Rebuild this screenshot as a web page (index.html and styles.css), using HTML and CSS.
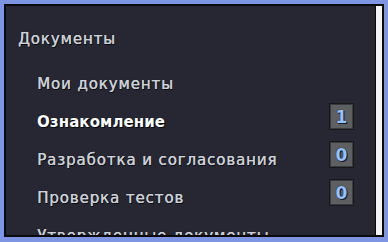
FILE: index.html
```html
<!DOCTYPE html>
<html lang="ru">
<head>
<meta charset="utf-8">
<link rel="stylesheet" href="styles.css">
</head>
<body>
<div class="frame">
  <div class="inner">
    <div class="content">
      <div class="heading">Документы</div>
      <ul class="menu">
        <li class="item"><span class="label">Мои документы</span></li>
        <li class="item active"><span class="label">Ознакомление</span><span class="badge">1</span></li>
        <li class="item"><span class="label">Разработка и согласования</span><span class="badge">0</span></li>
        <li class="item"><span class="label">Проверка тестов</span><span class="badge">0</span></li>
        <li class="item"><span class="label">Утвержденные документы</span></li>
      </ul>
    </div>
    <div class="scrollbar"></div>
  </div>
</div>
</body>
</html>
```
FILE: styles.css
```css
html, body {
  margin: 0;
  padding: 0;
  width: 388px;
  height: 242px;
  overflow: hidden;
  background: #7d95e2;
}
.frame {
  box-sizing: border-box;
  width: 388px;
  height: 242px;
  border-style: solid;
  border-color: #7d95e2;
  border-width: 4px 4px 5px 4px;
}
.inner {
  box-sizing: border-box;
  height: 100%;
  border: 2px solid #0a0a0c;
  display: flex;
  background: #262732;
}
.content {
  flex: 1;
  overflow: hidden;
  font-family: "DejaVu Sans", sans-serif;
  font-size: 15px;
  letter-spacing: 0.9px;
  color: #cdd0d6;
  text-shadow: 0.4px 0 0 #cdd0d6, 0 0 1px #000, 1px 1px 0 #0b0b10;
}
.scrollbar {
  width: 6px;
  background: #f4f4f4;
  border-left: 1px solid #0a0a0c;
}
.heading {
  padding: 23px 0 0 12px;
  height: 20px;
  line-height: 20px;
}
.menu {
  list-style: none;
  margin: 0;
  padding: 16px 22px 0 31px;
}
.item {
  display: flex;
  align-items: center;
  justify-content: space-between;
  height: 38px;
  white-space: nowrap;
}
.active .label {
  color: #ffffff;
  font-weight: bold;
  letter-spacing: 0.1px;
  text-shadow: 0 0 1px #000, 1px 1px 0 #0b0b10;
}
.badge {
  box-sizing: border-box;
  width: 23px;
  height: 25px;
  margin-top: -11px;
  display: flex;
  align-items: center;
  justify-content: center;
  background: #5e5f61;
  border: 1px solid #3a3b3e;
  box-shadow: 0 0 0 1px #17171c;
  color: #94c2ff;
  font-size: 17px;
  font-weight: bold;
  letter-spacing: 0;
  text-shadow: 0 0 1px #000, 1px 1px 0 #1a1a22;
}
```
